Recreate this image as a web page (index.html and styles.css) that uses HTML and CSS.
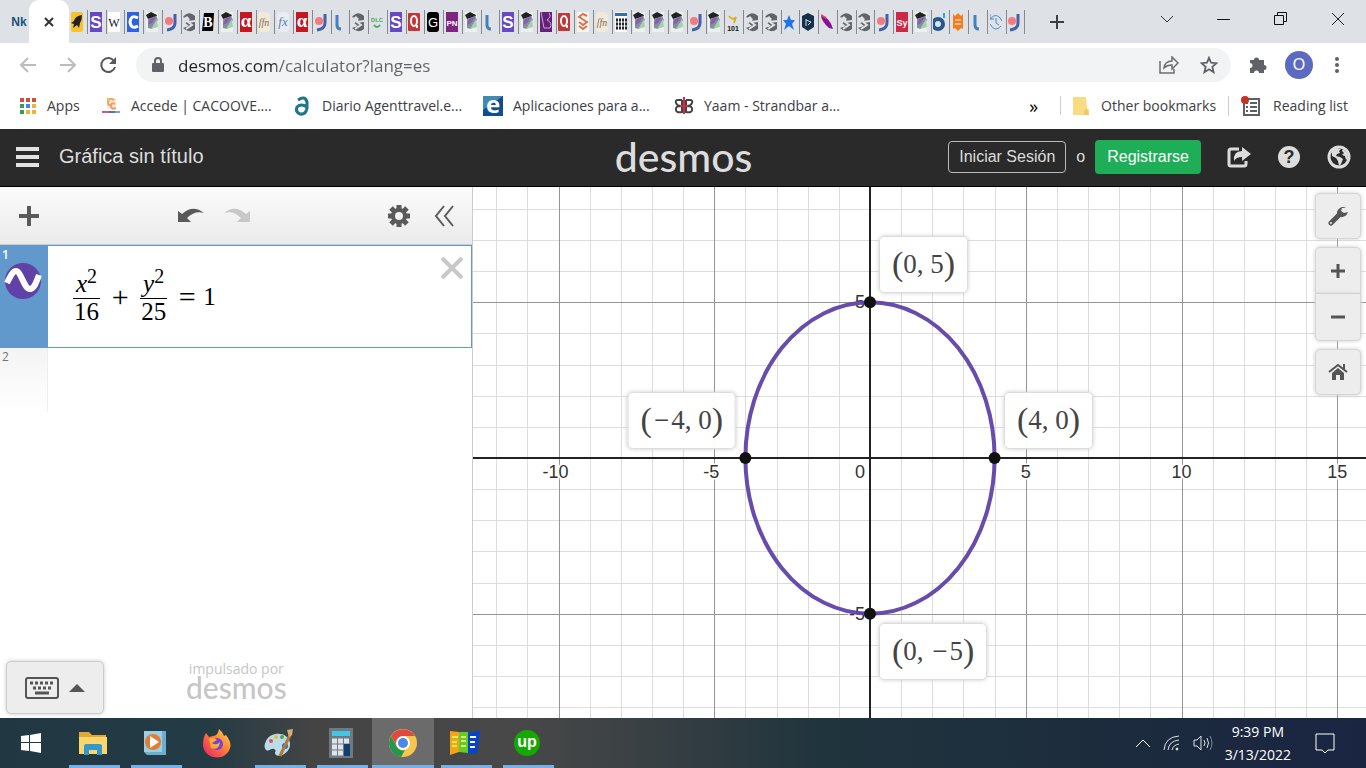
FILE: index.html
```html
<!DOCTYPE html>
<html lang="es">
<head>
    <meta charset="UTF-8">
    <meta name="viewport" content="width=device-width, initial-scale=1.0">
    <title>Desmos | Calculadora gráfica</title>
    <link rel="stylesheet" href="styles.css">
</head>
<body>

<nav class="tab-strip" aria-label="Pestañas">
    <button class="first-tab" aria-label="Nk"><svg width="16" height="20" viewBox="0 0 16 20"><text x="8" y="14" font-size="12" font-weight="700" fill="#15527c">Nk</text></svg></button>
    <button class="active-tab" aria-label="Cerrar pestaña"><svg width="12" height="12" viewBox="0 0 12 12"><path d="M2 2l8 8M10 2l-8 8" stroke="#333" stroke-width="2"/></svg></button>
    <div class="tabs" id="tabs"></div>
    <button class="new-tab" aria-label="Nueva pestaña"><svg width="16" height="16" viewBox="0 0 16 16"><path d="M8 1v14M1 8h14" stroke="#3c4043" stroke-width="2"/></svg></button>
    <div class="window-controls">
        <button aria-label="Buscar"><svg width="14" height="10" viewBox="0 0 14 10"><path d="M1 2l6 6 6-6" fill="none" stroke="#333"/></svg></button>
        <button aria-label="Minimizar"><svg width="13" height="10" viewBox="0 0 13 10"><path d="M0 5.500h13" stroke="#111"/></svg></button>
        <button aria-label="Restaurar"><svg width="13" height="13" viewBox="0 0 13 13"><path d="M.5 3.500h9v9h-9zM3.500 3V.5h9v9H10" fill="none" stroke="#111"/></svg></button>
        <button aria-label="Cerrar"><svg width="14" height="14" viewBox="0 0 14 14"><path d="M1 1l12 12M13 1L1 13" stroke="#222"/></svg></button>
    </div>
</nav>

<div class="toolbar">
    <button class="nav-button" aria-label="Atrás"><svg width="18" height="18" viewBox="0 0 18 18"><path d="M17 9H2m7-7L2 9l7 7" fill="none" stroke="#babcbe" stroke-width="2"/></svg></button>
    <button class="nav-button" aria-label="Adelante"><svg width="18" height="18" viewBox="0 0 18 18"><path d="M1 9h15M9 2l7 7-7 7" fill="none" stroke="#babcbe" stroke-width="2"/></svg></button>
    <button class="nav-button" aria-label="Recargar"><svg width="18" height="18" viewBox="0 0 18 18"><path d="M15 5a7 7 0 1 0 1 6" fill="none" stroke="#55585c" stroke-width="2"/><path d="M17 1v7h-7z" fill="#55585c"/></svg></button>
    <div class="address-bar">
        <svg width="12" height="16" viewBox="0 0 12 16"><path d="M1 6h10q1 0 1 1v7q0 1-1 1H1q-1 0-1-1V7q0-1 1-1z" fill="#5f6368"/><path d="M3 6V4q0-3 3-3t3 3v2" fill="none" stroke="#5f6368" stroke-width="2"/></svg>
        <input class="url" type="text" aria-label="Dirección" value="desmos.com/calculator?lang=es">
        <button class="icon-button" aria-label="Compartir"><svg width="20" height="18" viewBox="0 0 20 18"><path d="M1 5v12h14v-4M5 12q1-7 8-7V1l6 6-6 6V9q-5 0-8 3z" fill="none" stroke="#6a6d71" stroke-width="1.500"/></svg></button>
        <button class="icon-button" aria-label="Favorito"><svg width="18" height="18" viewBox="0 0 20 20"><path d="M10 2l2.300 5.500 6 .5-4.600 4 1.400 6L10 14.800 4.900 18l1.400-6L1.700 8l6-.5z" fill="none" stroke="#5f6368" stroke-width="2"/></svg></button>
    </div>
    <button class="extension" aria-label="Extensiones"><svg width="18" height="18" viewBox="0 0 18 18"><path d="M1 4h4a2.500 2.500 0 1 1 5 0h5v5a2.300 2.300 0 1 1 0 5v3h-5a2.500 2.500 0 0 0-5 0H1v-5a2.500 2.500 0 0 0 0-5z" fill="#5f6368"/></svg></button>
    <button class="avatar">O</button>
    <button class="more" aria-label="Menú"><svg width="4" height="16" viewBox="0 0 4 16" fill="#5f6368"><circle cx="2" cy="2" r="2"/><circle cx="2" cy="8" r="2"/><circle cx="2" cy="14" r="2"/></svg></button>
</div>

<div class="bookmarks">
    <a class="bookmark apps" href="#"><svg width="18" height="18" viewBox="0 0 18 18"><path d="M1 3h16" stroke="#d54b3d" stroke-width="4" stroke-dasharray="4 2"/><path d="M1 9h4M1 15h4" stroke="#3b9a58" stroke-width="4"/><path d="M7 9h4" stroke="#4285e4" stroke-width="4"/><path d="M13 9h4M7 15h10" stroke="#edb23c" stroke-width="4" stroke-dasharray="4 2"/></svg><span>Apps</span></a>
    <a class="bookmark" href="#"><svg width="20" height="20" viewBox="0 0 20 20"><path d="M6 2h9v11H6z" fill="#faead2"/><path d="M13 4q-6-3-6 2 0 4 3 3M14 8q-4-2-4 2t5 2" fill="none" stroke="#ee9f6b" stroke-width="2"/><path d="M6 2l3 3" stroke="#e4ca56" stroke-width="2"/><path d="M1 16h7" stroke="#ce559c" stroke-width="2"/><path d="M8 16h6" stroke="#6366be" stroke-width="2"/><path d="M14 16h5" stroke="#5ebd94" stroke-width="2"/></svg><span>Accede | CACOOVE....</span></a>
    <a class="bookmark" href="#"><svg width="20" height="20" viewBox="0 0 20 20"><path d="M6 4q7-5 9 2v6q-1 7-7 6-5-2-3-7 4-4 10 0" fill="none" stroke="#1f788a" stroke-width="3"/></svg><span>Diario Agenttravel.e...</span></a>
    <a class="bookmark" href="#"><svg width="20" height="20" viewBox="0 0 20 20"><rect width="20" height="20" fill="#0f4c92"/><path d="M0 0h20L0 14z" fill="#418ab2"/><text x="10" y="17" font-size="24" font-weight="700" fill="#fff">e</text></svg><span>Aplicaciones para a...</span></a>
    <a class="bookmark" href="#"><svg width="20" height="20" viewBox="0 0 20 20"><path d="M8 4H4Q1 4 2 7q1 3 5 3-6 0-5 4 0 3 6 2V4M12 4h4q3 0 2 3-1 3-5 3 6 0 5 4 0 3-6 2V4" fill="none" stroke="#444" stroke-width="2"/><path d="M10 1v17M6 10h8" stroke="#d52c43" stroke-width="2"/></svg><span>Yaam - Strandbar a...</span></a>
    <button class="overflow" aria-label="Más marcadores">»</button>
    <a class="bookmark-right" href="#"><svg width="16" height="18" viewBox="0 0 16 18"><path d="M0 0h13l1 12h2v6H0z" fill="#f9dc82"/><path d="M11 18v-4l3-3 2 7z" fill="#efc85f"/></svg><span>Other bookmarks</span></a>
    <a class="bookmark-right" href="#"><svg width="20" height="20" viewBox="0 0 20 20"><path d="M3 3h15v16H3z" fill="#fff" stroke="#5c5f63" stroke-width="2"/><path d="M9 7h7M9 11h7M9 15h7M5 7h2M5 11h2M5 15h2" stroke="#5c5f63" stroke-width="2"/><circle cx="4" cy="4" r="4" fill="#c33127"/></svg><span>Reading list</span></a>
</div>

<header class="app-header">
    <div class="header-left">
        <button aria-label="Menú"><svg width="23" height="20" viewBox="0 0 23 20"><path d="M0 2h23M0 10h23M0 18h23" stroke="#e2e2e2" stroke-width="4"/></svg></button>
        <h1 class="graph-title">Gráfica sin título</h1>
    </div>
    <a class="logo" href="#">desmos</a>
    <div class="header-right">
        <button class="login">Iniciar Sesión</button>
        <span class="or">o</span>
        <button class="signup">Registrarse</button>
        <button class="header-icon" aria-label="Compartir"><svg width="24" height="22" viewBox="0 0 24 22"><path d="M12 3H4Q2 3 2 5v13q0 2 2 2h13q2 0 2-2v-3" fill="none" stroke="#ddd" stroke-width="3"/><path d="M7 15Q6 5 15 5V1l9 7-9 7v-4q-6 0-8 4z" fill="#ddd"/></svg></button>
        <button class="header-icon" aria-label="Ayuda"><svg width="24" height="24" viewBox="0 0 24 24"><circle cx="12" cy="12" r="11" fill="#ddd"/><text x="12" y="18" font-size="18" font-weight="700" fill="#2a2a2a">?</text></svg></button>
        <button class="header-icon" aria-label="Idioma"><svg width="24" height="24" viewBox="0 0 24 24"><circle cx="12" cy="12" r="10" fill="none" stroke="#ddd" stroke-width="3"/><path d="M5 6l4-3 5 1-2 2 1 2-3 1-1 2 4 1 3 2-2 5-2 2-1-5-2-3-4-2zM16 4l4 4 1 5-2 2-1-4-3-1 2-2-2-2z" fill="#ddd"/></svg></button>
    </div>
</header>

<main class="workspace">
    <section class="expressions">
        <div class="expression-tools">
            <button aria-label="Agregar"><svg width="22" height="22" viewBox="0 0 22 22"><path d="M11 1v20M1 11h20" stroke="#5a5a5a" stroke-width="4"/></svg></button>
            <div class="history">
                <button aria-label="Deshacer"><svg width="26" height="16" viewBox="0 0 26 16"><path d="M0 3l4 3Q15-4 26 5 17 2 9 10l4 4H0z" fill="#5a5a5a"/></svg></button>
                <button aria-label="Rehacer"><svg width="26" height="16" viewBox="0 0 26 16"><path d="M26 3l-4 3Q11-4 0 5q9-3 17 5l-4 4h13z" fill="#c8c8c8"/></svg></button>
            </div>
            <button aria-label="Ajustes"><svg width="22" height="22" viewBox="0 0 22 22"><circle cx="11" cy="11" r="6" fill="none" stroke="#5a5a5a" stroke-width="4"/><path d="M11 0v4M11 18v4M0 11h4M18 11h4M3 3l3 3M16 16l3 3M19 3l-3 3M6 16l-3 3" stroke="#5a5a5a" stroke-width="5"/></svg></button>
            <button class="collapse" aria-label="Ocultar lista"><svg width="20" height="22" viewBox="0 0 20 22"><path d="M10 1L2 11l8 10M19 1l-8 10 8 10" fill="none" stroke="#5a5a5a" stroke-width="2"/></svg></button>
        </div>

        <div class="expression selected">
            <div class="gutter">
                <span>1</span>
                <button class="curve-icon" aria-label="Mostrar curva"><svg width="38" height="38" viewBox="0 0 38 38"><circle cx="19" cy="19" r="18" fill="#6042a6"/><path d="M3 21c4-8 6-12 9-12 5 0 8 18 14 18 4 0 6-6 9-14" fill="none" stroke="#fff" stroke-width="6"/></svg></button>
            </div>
            <div class="formula">
                <span class="fraction"><span class="numerator"><i>x</i><sup>2</sup></span><span>16</span></span>
                <span class="operator">+</span>
                <span class="fraction"><span class="numerator"><i>y</i><sup>2</sup></span><span>25</span></span>
                <span class="operator">=</span>
                <span class="result">1</span>
            </div>
            <button class="remove" aria-label="Eliminar"><svg width="24" height="24" viewBox="0 0 24 24"><path d="M2 2l20 20M22 2L2 22" stroke="#c8c8c8" stroke-width="4"/></svg></button>
        </div>
        <div class="expression empty">
            <div class="gutter"><span>2</span></div>
        </div>

        <footer class="expression-footer">
            <button class="keypad" aria-label="Teclado">
                <svg width="34" height="22" viewBox="0 0 34 22"><rect x="1" y="1" width="32" height="20" rx="2" fill="none" stroke="#555" stroke-width="2"/><path d="M5 6h24M8 11h18" stroke="#555" stroke-width="3" stroke-dasharray="3 2"/><path d="M10 16h14" stroke="#555" stroke-width="3"/></svg>
                <svg width="16" height="10" viewBox="0 0 16 10"><path d="M8 1l8 8H0z" fill="#555"/></svg>
            </button>
            <a class="powered" href="#"><small>impulsado por</small><span>desmos</span></a>
        </footer>
    </section>

    <section class="graph" id="graph">
        <svg class="plane" id="plane" role="img" aria-label="Elipse"></svg>
        <div class="point-label above" data-x="0" data-y="5"><b>(</b>0, 5<b>)</b></div>
        <div class="point-label above left" data-x="-4" data-y="0"><b>(</b><span class="minus">−</span>4, 0<b>)</b></div>
        <div class="point-label above" data-x="4" data-y="0"><b>(</b>4, 0<b>)</b></div>
        <div class="point-label" data-x="0" data-y="-5"><b>(</b>0, <span class="minus">−</span>5<b>)</b></div>

        <div class="graph-tools">
            <button aria-label="Configuración"><svg width="20" height="20" viewBox="0 0 20 20"><path d="M3 17l9-9" stroke="#555" stroke-width="5" stroke-linecap="round"/><path d="M18 2a6 6 0 0 0-9 6q3 5 8 2 2-1 3-4l-4 1-3-2 1-3z" fill="#555"/><circle cx="3" cy="17" r="1" fill="#eee"/></svg></button>
            <div class="zoom">
                <button aria-label="Acercar"><svg width="16" height="16" viewBox="0 0 16 16"><path d="M8 1v14M1 8h14" stroke="#555" stroke-width="3"/></svg></button>
                <button aria-label="Alejar"><svg width="16" height="16" viewBox="0 0 16 16"><path d="M1 8h14" stroke="#555" stroke-width="3"/></svg></button>
            </div>
            <button aria-label="Inicio"><svg width="20" height="18" viewBox="0 0 20 18"><path d="M1 9l9-7 9 7M16 6V1" fill="none" stroke="#555" stroke-width="2"/><path d="M4 10l6-5 6 5v7h-4v-5H8v5H4z" fill="#555"/></svg></button>
        </div>
    </section>
</main>

<footer class="taskbar">
    <button class="start" aria-label="Inicio"><svg width="20" height="20" viewBox="0 0 20 20"><path d="M0 3l8-1v7H0zM9 2l11-2v9H9zM0 10h8v8l-8-1zM9 10h11v10L9 18z" fill="#fff"/></svg></button>
    <button class="task open" aria-label="Explorador"><svg width="28" height="24" viewBox="0 0 28 24"><path d="M0 1h10l3 3h14v19H0z" fill="#e1a934"/><path d="M0 6h28v17H0z" fill="#fbd66d"/><path d="M5 24v-9q0-2 2-2h14q2 0 2 2v9h-5v-5h-8v5z" fill="#3598cc"/></svg></button>
    <button class="task open" aria-label="Multimedia"><svg width="26" height="26" viewBox="0 0 26 26"><path d="M2 1h22v24H5l-3-3z" fill="#6baed0"/><path d="M2 1h18v21H2z" fill="#9bcfe5"/><circle cx="11" cy="12" r="8" fill="#e57b32"/><path d="M8 6l9 6-9 6z" fill="#fff"/></svg></button>
    <button class="task" aria-label="Firefox"><svg width="30" height="30" viewBox="0 0 30 30"><defs><linearGradient id="fire" x1="1" y1="0" x2="0" y2="1"><stop stop-color="#ffe24b"/><stop offset=".5" stop-color="#ff7139"/><stop offset="1" stop-color="#e51f70"/></linearGradient></defs><path d="M4 5l3 4 4-1q5 0 6-7 4 3 5 7l2-1q6 8 4 13c-4 14-26 12-27-3Q1 9 4 5z" fill="url(#fire)"/><circle cx="15" cy="16" r="6" fill="#7543d1"/><path d="M7 11q4-3 8 1l-5 3q4 3 8-1-1 9-9 6z" fill="#ffaa31"/></svg></button>
    <button class="task open" aria-label="Paint"><svg width="30" height="30" viewBox="0 0 30 30"><path d="M2 13C7 2 25 4 26 15c1 9-10 15-14 12-3-3 2-4-2-6-3-1-5 3-8 1q-3-3 0-9z" fill="#b9dbea"/><circle cx="7" cy="13" r="2" fill="#df5848"/><circle cx="12" cy="9" r="2" fill="#efb638"/><circle cx="18" cy="9" r="2" fill="#49a651"/><circle cx="21" cy="18" r="3" fill="#286eb5"/><path d="M27 5L16 28" stroke="#b67838" stroke-width="3"/><path d="M23 2l6-1-1 6-3 2z" fill="#d6ab78"/></svg></button>
    <button class="task open" aria-label="Calculadora"><svg width="24" height="30" viewBox="0 0 24 30"><rect width="24" height="30" fill="#6f7981"/><path d="M3 3h18v5H3z" fill="#45c5e4"/><path d="M3 13h18M3 19h12M3 25h12" stroke="#dfe4e8" stroke-width="5" stroke-dasharray="5 1"/><path d="M15 16h6v12h-6z" fill="#123f71"/></svg></button>
    <button class="task open current" aria-label="Chrome"><svg width="28" height="28" viewBox="0 0 28 28"><circle cx="14" cy="14" r="14" fill="#f7c64c"/><path d="M2 7a14 14 0 0 1 24 0H14L8 17z" fill="#dd4a3e"/><path d="M2 7l6 11q4 5 8 3l-4 7A14 14 0 0 1 2 7z" fill="#26964e"/><circle cx="14" cy="14" r="7" fill="#fff"/><circle cx="14" cy="14" r="5" fill="#4b87e8"/></svg></button>
    <button class="task open" aria-label="Biblioteca"><svg width="32" height="26" viewBox="0 0 32 26"><path d="M1 1l9 1v20l-9 3z" fill="#f5a414"/><path d="M10 2h9v21l-9-1z" fill="#66c92d"/><path d="M19 3l12-2-3 23-9-1z" fill="#0744cd"/><path d="M3 7h6M3 12h5M3 16h5M12 7h5M12 11h5M12 16h5" stroke="#d5ed63" stroke-width="2"/><path d="M21 7h6M21 12h5M21 17h5" stroke="#fff" stroke-width="2"/></svg></button>
    <button class="task open" aria-label="Upwork"><svg width="26" height="26" viewBox="0 0 26 26"><circle cx="13" cy="13" r="13" fill="#14a800"/><text x="13" y="17" font-size="16" font-weight="700" fill="#fff">up</text></svg></button>
    <div class="tray">
        <button aria-label="Iconos ocultos"><svg width="16" height="10" viewBox="0 0 16 10"><path d="M1 9l7-7 7 7" fill="none" stroke="#fff"/></svg></button>
        <button aria-label="Red"><svg width="18" height="18" viewBox="0 0 18 18" fill="none" stroke="#dce2e8"><path d="M1 16Q2 3 16 2M5 16Q6 7 16 6M9 16q1-5 7-6"/><circle cx="14" cy="15" r="1" fill="#fff"/></svg></button>
        <button aria-label="Volumen"><svg width="20" height="18" viewBox="0 0 20 18" fill="none" stroke="#dce2e8"><path d="M1 6h3l4-4v14l-4-4H1zM11 6q2 3 0 6M14 4q3 5 0 10"/><path d="M17 2q4 7 0 14" stroke="#7f8a9b"/></svg></button>
        <time class="clock" datetime="2022-03-13T21:39"><span>9:39 PM</span><span>3/13/2022</span></time>
        <button class="notices" aria-label="Notificaciones"><svg width="20" height="20" viewBox="0 0 20 20"><path d="M1 1h18v16h-6l-3 3-3-3H1z" fill="none" stroke="#fff"/></svg></button>
    </div>
</footer>

<script>
    const SVG = 'http://www.w3.org/2000/svg';

    // favicons, drawn in a 12x20 box
    const icons = {
        rocket: '<rect width="12" height="20" rx="2" fill="#f9c22b"/><path d="M11 3Q4 4 3 9L0 11l3 1-1 4 4-3 2 3 1-5q2-3 2-8z" fill="#222"/>',
        s: '<rect width="12" height="20" fill="#6549c5"/><text x="6" y="16" font-size="17" font-weight="700" fill="#fff">S</text>',
        w: '<rect width="12" height="20" fill="#fff"/><text class="serif" x="6" y="15" font-size="12" fill="#111">W</text>',
        c: '<rect width="12" height="20" fill="#2e62e0"/><path d="M11 6q-7-4-8 4 1 8 8 4" fill="none" stroke="#fff" stroke-width="3"/>',
        fly: '<rect width="12" height="20" fill="#edf0f1"/><path d="M0 3l5-3 6 3-1 2-8 2z" fill="#222"/><path d="M2 7l8-3 2 4-6 9-4-1z" fill="#83909b"/><path d="M4 7l6-2-4 6-4 2z" fill="#8a5ab5"/><path d="M11 7l1 8-7 2z" fill="#a5cfb1"/>',
        dot: '<path d="M10 2v9q0 6-8 7" fill="none" stroke="#4661a8" stroke-width="3"/><circle cx="4" cy="9" r="4" fill="#f37b7f"/>',
        globe: '<path d="M0 5q6-7 12-1v13q-6 5-12-1l6-2-5-4 6-3-3-3-4 3z" fill="#60656a"/><path d="M0 6l5 2-4 3M12 9l-7 1 4 3-6 4" stroke="#dee1e6" stroke-width="2" fill="none"/>',
        b: '<path d="M2 1h10l-1 18H0z" fill="#000"/><text class="serif" x="6" y="15" font-size="14" font-weight="700" fill="#fff">B</text>',
        alpha: '<rect width="12" height="20" fill="#c41722"/><text class="serif" x="6" y="15" font-size="19" font-weight="700" fill="#fff">α</text>',
        ffn: '<rect width="12" height="20" rx="4" fill="#f1eadb"/><text class="serif" x="6" y="14" font-size="10" font-style="italic" fill="#806d4d">ſfn</text>',
        ffx: '<rect width="12" height="20" rx="4" fill="#e7ecf5"/><text class="serif" x="6" y="14" font-size="13" font-style="italic" fill="#667da5">fx</text>',
        l: '<path d="M4 3v10q0 4 4 4" fill="none" stroke="#4281bd" stroke-width="3"/>',
        dlc: '<text x="6" y="10" font-size="6" font-weight="700" fill="#4bae54">DLC</text><path d="M3 13q3 4 6 0" fill="none" stroke="#4bae54" stroke-width="2"/>',
        ring: '<rect y="1" width="12" height="18" rx="1" fill="#c63535"/><ellipse cx="6" cy="9" rx="3" ry="5" fill="none" stroke="#fff" stroke-width="2"/><path d="M9 13v3" stroke="#fff" stroke-width="2"/>',
        g: '<rect width="12" height="20" rx="3" fill="#000"/><text x="6" y="15" font-size="13" fill="#fff">G</text>',
        pn: '<rect width="12" height="20" fill="#7d267f"/><text x="6" y="14" font-size="8" font-weight="700" fill="#fff">PN</text>',
        bp: '<rect width="12" height="20" fill="#632177"/><path d="M1 0l3 16h6q3-5-3-8 5-3 2-7" fill="none" stroke="#d4a3dc"/>',
        layers: '<rect width="12" height="20" fill="#faf4f0"/><path d="M10 4L6 2 2 5l8 5-4 3-4-3M2 14l4 3 4-3" fill="none" stroke="#d47852" stroke-width="2"/>',
        calc: '<rect width="12" height="20" fill="#f7f8fa"/><path d="M0 1h12v3H0z" fill="#386f9e"/><path d="M1 8h11M1 12h11M1 16h11" stroke="#222" stroke-width="3" stroke-dasharray="2 1"/>',
        binary: '<path d="M2 4q4 5 7 1l-2 6" fill="none" stroke="#dcae2e" stroke-width="2"/><text x="6" y="19" font-size="7" font-weight="700" fill="#111">101</text>',
        star: '<path d="M6 3l2 5h4l-3 4 2 6-5-4-5 4 2-6-3-4h4z" fill="#1d73e8"/>',
        code: '<path d="M0 4l6-3 6 3v11l-6 4-6-4z" fill="#16324a"/><path d="M4 7v7m0-6l5 2-3 3" stroke="#c8dbe7" fill="none"/>',
        feather: '<path d="M0 3q9 3 12 14l-4-1Q0 9 0 3z" fill="#891092"/><path d="M0 3l5 3" stroke="#e63f4f" stroke-width="2"/>',
        sy: '<rect width="12" height="20" fill="#cc2949"/><text x="6" y="14" font-size="9" font-weight="700" fill="#fff">Sy</text>',
        d: '<path d="M11 1v5" stroke="#37a5c7" stroke-width="2"/><circle cx="5" cy="12" r="5" fill="none" stroke="#25578a" stroke-width="4"/>',
        scroll: '<path d="M1 2l2 2 3-3 3 3 2-2v15l-2-1-3 3-3-3-2 1z" fill="#f57b1c"/><path d="M3 8h6M3 12h6" stroke="#fff"/>',
        clock: '<path d="M0 7q7-8 12 2M0 12q5 9 11 2M6 6v5l3 2M0 2v5h4" fill="none" stroke="#448bd2" stroke-width="1"/>'
    };
    const favicons = ['rocket', 's', 'w', 'c', 'fly', 'dot', 'globe', 'b', 'fly', 'alpha', 'ffn', 'ffx', 'alpha',
        'dot', 'l', 'globe', 'dlc', 's', 'ring', 'g', 'pn', 'fly', 'l', 's', 'fly', 'bp', 'ring', 'layers', 'ffn',
        'calc', 'fly', 'fly', 'fly', 'dot', 'fly', 'binary', 'globe', 'globe', 'star', 'code', 'feather', 'globe',
        'globe', 'dot', 'sy', 'fly', 'd', 'scroll', 'l', 'clock', 'dot'];

    document.getElementById('tabs').innerHTML = favicons.map((name, i) =>
        `<button class="tab" aria-label="Pestaña ${i + 3}"><svg class="favicon" viewBox="0 0 12 20">${icons[name]}</svg></button>`
    ).join('');

    const unit = 31.15;
    const graph = document.getElementById('graph');
    const plane = document.getElementById('plane');

    function add(tag, attrs, text) {
        const el = document.createElementNS(SVG, tag);
        Object.keys(attrs).forEach(key => el.setAttribute(key, attrs[key]));
        if (text) el.textContent = text;
        plane.appendChild(el);
    }

    function draw() {
        const w = graph.clientWidth;
        const h = graph.clientHeight;
        const ox = Math.round(w * 0.445);
        const oy = Math.round(h * 0.511);
        plane.innerHTML = '';

        // minor lines first so the major ones stay on top
        [false, true].forEach(major => {
            const kind = major ? 'major' : 'minor';
            for (let n = Math.ceil(-ox / unit); n * unit < w - ox; n++) {
                const x = Math.round(ox + n * unit);
                if (n && (n % 5 === 0) === major) add('line', {class: kind, x1: x, x2: x, y1: 0, y2: h});
            }
            for (let n = Math.ceil(-oy / unit); n * unit < h - oy; n++) {
                const y = Math.round(oy + n * unit);
                if (n && (n % 5 === 0) === major) add('line', {class: kind, x1: 0, x2: w, y1: y, y2: y});
            }
        });
        add('line', {class: 'axis', x1: ox, x2: ox, y1: 0, y2: h});
        add('line', {class: 'axis', x1: 0, x2: w, y1: oy, y2: oy});

        for (let n = -50; n <= 50; n += 5) {
            const x = ox + n * unit;
            if (n && x > 30 && x < w) add('text', {class: 'number', x: n < 0 ? x - 3 : x, y: oy + 20}, String(n));
        }
        add('text', {class: 'number end', x: ox - 5, y: oy + 20}, '0');
        add('text', {class: 'number end', x: ox - 5, y: oy - 5 * unit + 6}, '5');
        add('text', {class: 'number end', x: ox - 5, y: oy + 5 * unit + 6}, '-5');

        add('ellipse', {class: 'curve', cx: ox, cy: oy, rx: 4 * unit, ry: 5 * unit});
        document.querySelectorAll('.point-label').forEach(label => {
            const x = ox + label.dataset.x * unit;
            const y = oy - label.dataset.y * unit;
            add('circle', {class: 'point', cx: x, cy: y, r: 6});
            label.style.left = Math.round(x) + 'px';
            label.style.top = Math.round(y) + 'px';
        });
    }

    draw();
    window.addEventListener('resize', draw);
</script>
</body>
</html>
```
FILE: styles.css
```css
* {
    margin: 0;
    padding: 0;
    box-sizing: border-box;
}

body {
    display: flex;
    flex-direction: column;
    height: 100vh;
    overflow: hidden;
    font-family: 'Liberation Sans', Arial, sans-serif;
    font-size: 16px;
    background: #fff;
}

button {
    display: flex;
    align-items: center;
    justify-content: center;
    flex-shrink: 0;
    border: none;
    background: none;
    font: inherit;
    cursor: pointer;
}

a {
    color: inherit;
    text-decoration: none;
}

svg {
    flex-shrink: 0;
}

svg text {
    text-anchor: middle;
}

svg .serif {
    font-family: 'Liberation Serif', serif;
}

/* tabs */
.tab-strip {
    display: flex;
    height: 43px;
    flex-shrink: 0;
    background: #dee1e6;
}

.first-tab {
    width: 29px;
    padding-left: 9px;
}

.favicon {
    width: 12px;
    height: 20px;
}

.active-tab {
    width: 40px;
    border-radius: 10px 10px 0 0;
    background: #fff;
}

.tabs {
    display: flex;
    flex: 0 1 956px;
    min-width: 0;
}

.tab {
    flex: 1 1 0;
    align-self: center;
    min-width: 0;
    height: 24px;
    padding-right: 2px;
    border-right: 1px solid #85898e;
}

.new-tab {
    width: 64px;
}

.window-controls {
    display: flex;
    margin-left: auto;
    padding-bottom: 6px;
}

.window-controls button {
    width: 57px;
}

/* toolbar */
.toolbar {
    display: flex;
    align-items: center;
    height: 44px;
    flex-shrink: 0;
    padding: 0 8px;
}

.nav-button {
    width: 40px;
    height: 40px;
}

.address-bar {
    display: flex;
    flex: 1;
    align-items: center;
    height: 34px;
    margin-left: 8px;
    padding: 0 7px 0 16px;
    border-radius: 17px;
    background: #f1f3f4;
}

.url {
    flex: 1;
    min-width: 0;
    margin-left: 14px;
    border: none;
    outline: none;
    font-family: 'Open Sans', sans-serif;
    font-size: 17px;
    color: transparent;
    background: linear-gradient(90deg, #202124 98px, #5f6368 98px);
    background-clip: text;
    -webkit-background-clip: text;
}

.icon-button {
    width: 30px;
    margin-left: 10px;
}

.extension {
    width: 54px;
}

.avatar {
    width: 28px;
    height: 28px;
    border-radius: 50%;
    background: #5c6bc0;
    color: #fff;
}

.more {
    width: 42px;
    margin-left: 3px;
}

/* bookmarks */
.bookmarks {
    display: flex;
    align-items: center;
    height: 42px;
    flex-shrink: 0;
    padding: 0 18px 5px 19px;
    font-family: 'Open Sans', sans-serif;
    font-size: 14px;
    color: #3c4043;
    white-space: nowrap;
}

.bookmark {
    display: flex;
    align-items: center;
    flex: 0 1 191px;
    gap: 10px;
    min-width: 0;
}

.apps {
    flex-basis: 82px;
}

.overflow {
    margin-left: auto;
    padding: 0 10px;
    font-size: 18px;
}

.bookmark-right {
    display: flex;
    align-items: center;
    gap: 12px;
    padding-left: 12px;
    margin-left: 12px;
    border-left: 1px solid #ccc;
}

/* app header */
.app-header {
    display: grid;
    grid-template-columns: 1fr auto 1fr;
    align-items: center;
    height: 58px;
    flex-shrink: 0;
    padding: 0 15px 2px 16px;
    border-bottom: 1px solid #000;
    background: #2a2a2a;
    color: #ddd;
}

.header-left,
.header-right {
    display: flex;
    align-items: center;
}

.graph-title {
    margin-left: 20px;
    font-size: 20px;
    font-weight: 400;
}

.logo {
    font-family: Lato, sans-serif;
    font-size: 41px;
    font-weight: 500;
    line-height: 40px;
}

.header-right {
    justify-content: flex-end;
}

.login,
.signup {
    height: 34px;
    padding: 0 12px;
    border-radius: 4px;
    color: #fff;
    background: #1eae57;
}

.login {
    height: 32px;
    padding: 0 10px;
    border: 1px solid #bbb;
    background: none;
    color: #ddd;
}

.or {
    padding: 0 10px;
}

.header-icon {
    width: 24px;
    margin-left: 26px;
}

/* expression list */
.workspace {
    display: flex;
    flex: 1;
    min-height: 0;
}

.expressions {
    display: flex;
    flex-direction: column;
    flex: 0 0 473px;
    border-right: 1px solid #ccc;
}

.expression-tools {
    display: flex;
    align-items: center;
    height: 58px;
    padding: 0 18px;
    border-bottom: 1px solid #ccc;
    background: linear-gradient(#fcfcfc, #eaeaea);
}

.history {
    display: flex;
    gap: 20px;
    margin: 0 auto;
}

.collapse {
    margin-left: 24px;
}

.expression {
    display: flex;
    height: 103px;
}

.expression.selected {
    border: 1px solid #6299cd;
    border-left: none;
}

.gutter {
    display: flex;
    flex-direction: column;
    flex: 0 0 48px;
    padding-left: 2px;
    font-family: 'Open Sans', sans-serif;
    font-size: 12px;
    line-height: 18px;
}

.selected .gutter {
    background: #6299cd;
    color: #fff;
    font-weight: 600;
}

.empty .gutter {
    height: 64px;
    border-right: 1px solid #eee;
    background: linear-gradient(#f4f4f4, #fff);
    color: #777;
}

.curve-icon {
    width: 42px;
    height: 34px;
}

.formula {
    display: flex;
    align-items: center;
    gap: 10px;
    padding-left: 25px;
    font-family: 'Liberation Serif', serif;
    font-size: 25px;
}

.fraction {
    display: flex;
    flex-direction: column;
    align-items: center;
    line-height: 26px;
}

.numerator {
    height: 30px;
    padding: 2px 3px 0;
    border-bottom: 1px solid #000;
}

sup {
    font-size: 20px;
    line-height: 0;
    vertical-align: 9px;
}

.operator {
    width: 20px;
    text-align: center;
    font-size: 30px;
}

.result {
    margin-left: -4px;
}

.remove {
    align-self: flex-start;
    margin: 10px 7px 0 auto;
}

.expression-footer {
    display: flex;
    align-items: flex-start;
    gap: 82px;
    margin-top: auto;
    padding: 0 6px 4px;
}

.keypad {
    gap: 10px;
    width: 98px;
    height: 53px;
    border: 1px solid #ccc;
    border-radius: 5px;
    background: #ededed;
    box-shadow: 0 0 4px #ccc;
}

.powered {
    display: flex;
    flex-direction: column;
    align-items: center;
    font-family: Lato, sans-serif;
    font-size: 30px;
    font-weight: 500;
    line-height: 20px;
    color: #c6c6c6;
}

.powered small {
    font-family: 'Open Sans', sans-serif;
    font-size: 14px;
    font-weight: 400;
    line-height: 16px;
}

/* graph */
.graph {
    position: relative;
    flex: 1;
    min-width: 0;
    overflow: hidden;
}

.plane {
    display: block;
    width: 100%;
    height: 100%;
}

.minor {
    stroke: #dcdcdc;
    stroke-width: 1;
    shape-rendering: crispEdges;
}

.major {
    stroke: #949494;
    stroke-width: 1;
    shape-rendering: crispEdges;
}

.axis {
    stroke: #222;
    stroke-width: 2;
}

.number {
    font-size: 18px;
    fill: #333;
    stroke: #fff;
    stroke-width: 3;
    paint-order: stroke;
}

.plane .end {
    text-anchor: end;
}

.curve {
    fill: none;
    stroke: #6042a6;
    stroke-width: 4;
    opacity: 0.95;
}

.point {
    fill: #111;
}

.point-label {
    position: absolute;
    display: flex;
    align-items: center;
    height: 57px;
    margin: 9px;
    padding: 0 12px;
    border: 1px solid #ddd;
    border-radius: 5px;
    background: rgba(255, 255, 255, 0.95);
    box-shadow: 0 0 4px #ccc;
    font-family: 'Liberation Serif', serif;
    font-size: 27px;
    color: #444;
    white-space: pre;
}

.point-label b {
    padding-bottom: 2px;
    font-size: 34px;
    font-weight: 400;
}

.minus {
    padding: 0 2px;
}

.point-label.above {
    margin-top: -66px;
}

.point-label.left {
    margin-left: -9px;
    transform: translateX(-100%);
}

.graph-tools {
    position: absolute;
    top: 6px;
    right: 5px;
    display: flex;
    flex-direction: column;
    gap: 8px;
}

.graph-tools button {
    width: 46px;
    height: 46px;
    border: 1px solid #d5d5d5;
    border-radius: 5px;
    background: #ededed;
    box-shadow: 0 0 4px #ccc;
}

.graph-tools .zoom button {
    height: 47px;
    border-radius: 5px 5px 0 0;
}

.graph-tools .zoom button + button {
    border-top: none;
    border-radius: 0 0 5px 5px;
}

/* taskbar */
.taskbar {
    display: flex;
    height: 50px;
    flex-shrink: 0;
    background: linear-gradient(90deg, #213842 0, #233b44 15%, #444 23%, #484848 38%, #3b4144 46%, #20343d 60%, #1c2b3d 82%, #1a2542 100%);
    color: #fff;
}

.start {
    width: 62px;
}

.task {
    position: relative;
    width: 62px;
}

.task.open::after {
    content: '';
    position: absolute;
    right: 4px;
    bottom: 0;
    left: 7px;
    height: 3px;
    background: #76b0e8;
}

.task.current {
    background: #6b6b6b;
}

.task.current::after {
    right: 0;
    left: 0;
}

.tray {
    display: flex;
    align-items: center;
    gap: 12px;
    margin-left: auto;
    padding-right: 31px;
    font-family: 'Open Sans', sans-serif;
    font-size: 14px;
}

.clock {
    display: flex;
    flex-direction: column;
    align-items: center;
    line-height: 23px;
}

.notices {
    margin-left: 12px;
}

/* narrow windows */
@media (max-width: 900px) {
    .expressions {
        flex-basis: 50%;
    }
}
```
